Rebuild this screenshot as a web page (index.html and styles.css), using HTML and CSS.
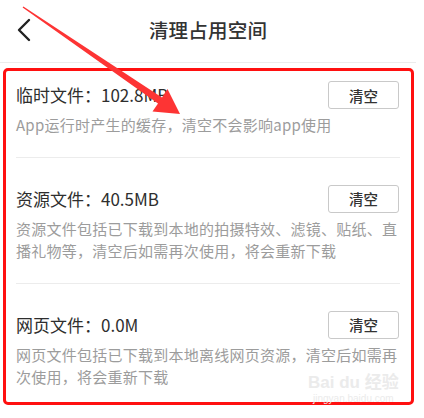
FILE: index.html
```html
<!DOCTYPE html>
<html lang="zh-CN">
<head>
  <meta charset="UTF-8" />
  <meta name="viewport" content="width=device-width, initial-scale=1.0" />
  <title>清理占用空间</title>
  <link rel="stylesheet" href="styles.css">
</head>
<body>
  <div class="screen">
    <header class="topbar">
      <svg class="back" width="16" height="24" viewBox="0 0 16 24">
        <polyline points="13,2 3,12 13,22" fill="none" stroke="#222" stroke-width="2.4" stroke-linecap="round" stroke-linejoin="round"/>
      </svg>
      <h1>清理占用空间</h1>
      <span></span>
    </header>

    <div class="list">
      <div class="item">
        <div class="item-head">
          <span class="item-title">临时文件：102.8MB</span>
          <button class="btn">清空</button>
        </div>
        <p class="desc">App运行时产生的缓存，清空不会影响app使用</p>
      </div>
      <div class="item">
        <div class="item-head">
          <span class="item-title">资源文件：40.5MB</span>
          <button class="btn">清空</button>
        </div>
        <p class="desc">资源文件包括已下载到本地的拍摄特效、滤镜、贴纸、直播礼物等，清空后如需再次使用，将会重新下载</p>
      </div>
      <div class="item">
        <div class="item-head">
          <span class="item-title">网页文件：0.0M</span>
          <button class="btn">清空</button>
        </div>
        <p class="desc">网页文件包括已下载到本地离线网页资源，清空后如需再次使用，将会重新下载</p>
      </div>
    </div>

    <!-- annotation overlay -->
    <div class="highlight"></div>
    <svg class="arrow" width="424" height="418" viewBox="0 0 424 418">
      <polygon points="23.4,6.4 162,97.6 167.5,89 180,114 152.5,111.5 158,103.4 22.6,7.6" fill="#fd3434"/>
    </svg>
    <div class="watermark">
      <div class="wm-logo">Bai du 经验</div>
      <div class="wm-url">jingyan.baidu.com</div>
    </div>
  </div>
</body>
</html>
```

FILE: styles.css
```css
:root {
  --text: #333;
  --muted: #9c9c9c;
  --line: #ececec;
  --red: #ff1010;
}
* { box-sizing: border-box; margin: 0; padding: 0; }
body {
  font-family: "Noto Sans CJK SC", "Noto Sans", sans-serif;
  background: #fff;
  color: var(--text);
  width: 424px;
  height: 418px;
  overflow: hidden;
}
.screen { position: relative; width: 416px; height: 418px; }

.topbar {
  height: 63px;
  display: grid;
  grid-template-columns: 48px 1fr 48px;
  align-items: center;
  padding: 0 16px;
  border-bottom: 1px solid var(--line);
}
.topbar .back { margin-top: -2px; }
.topbar h1 {
  text-align: center;
  font-size: 19.5px;
  font-weight: 500;
  line-height: 1;
  letter-spacing: 0.2px;
  margin-top: -2px;
  color: #333;
}

.list { padding: 0 16px; }
.item { padding: 27px 0 20px; border-bottom: 1px solid var(--line); }
.item:first-child { padding-top: 18px; }
.item:last-child { border-bottom: none; }
.item-head {
  display: flex;
  justify-content: space-between;
  align-items: center;
}
.item-title { font-size: 17px; line-height: 28px; color: #2e2e2e; }
.btn {
  width: 71px;
  height: 28px;
  margin-right: 1px;
  background: #fff;
  border: 1px solid #c9c9c9;
  border-radius: 3px;
  font-family: inherit;
  font-size: 14.5px;
  font-weight: 500;
  color: #333;
}
.desc {
  margin-top: 5px;
  font-size: 15px;
  line-height: 22.5px;
  letter-spacing: 0.25px;
  color: var(--muted);
}

.highlight {
  position: absolute;
  left: 3px;
  top: 68px;
  width: 411px;
  height: 337px;
  border: 3px solid var(--red);
  border-radius: 5px;
}
.arrow { position: absolute; left: 0; top: 0; }

.watermark {
  position: absolute;
  left: 308px;
  top: 372px;
  color: #ebebeb;
  text-align: center;
  font-family: "Liberation Sans", "Noto Sans CJK SC", sans-serif;
}
.wm-logo { font-size: 17px; font-weight: bold; line-height: 21px; }
.wm-url { font-size: 10px; line-height: 12px; }
```
